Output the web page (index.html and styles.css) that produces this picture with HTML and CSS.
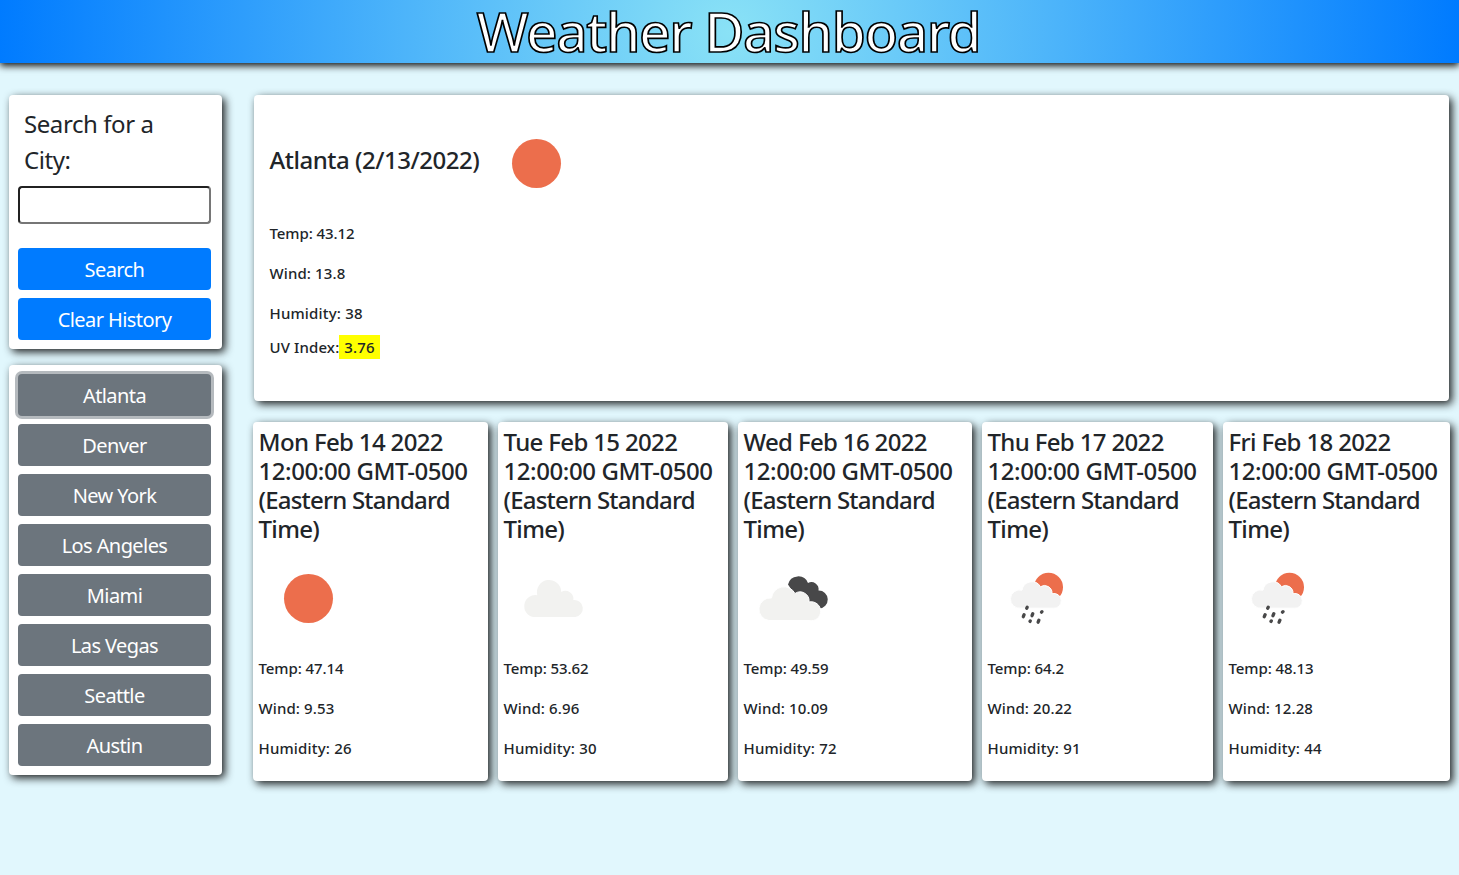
FILE: index.html
```html
<!DOCTYPE html>
<html lang="en">
<head>
<meta charset="utf-8">
<title>Weather Dashboard</title>
<link rel="stylesheet" href="styles.css">
</head>
<body>
<svg class="defs" width="0" height="0" aria-hidden="true">
  <symbol id="sun" viewBox="0 0 100 100"><circle cx="50.500" cy="49.500" r="24.5" fill="#ec6e4c"/></symbol>
  <symbol id="cloud" viewBox="0 0 100 100"><path fill="#f2f2f0" transform="translate(-1.700 -.5)" d="M32 68.500A11 11 0 1 1 36 46.800A12.200 12.200 0 1 1 60 43.500A8 8 0 0 1 72 51.600A8.500 8.500 0 1 1 74 68.500Z"/></symbol>
  <symbol id="broken" viewBox="0 0 100 100">
    <g transform="translate(-1 -.5)">
    <path fill="#484849" d="M46 36A10.500 10.500 0 0 1 66 34.500A7.200 7.200 0 0 1 76.500 42A7.800 7.800 0 1 1 77 60L62 60Z"/>
    <path fill="#f2f2f0" stroke="#fff" stroke-width="1" d="M27 72A11.200 11.200 0 1 1 29.500 49.500A12.500 12.500 0 0 1 53 45A9 9 0 0 1 67 53.500A9.500 9.500 0 1 1 67 72Z"/>
    </g>
  </symbol>
  <symbol id="rain" viewBox="0 0 100 100">
    <g transform="translate(1 -.3)">
    <circle cx="60.500" cy="38.500" r="14.500" fill="#ec6e4c"/>
    <path fill="#f2f2f2" stroke="#fff" stroke-width="1" d="M33 59.500A9.200 9.200 0 1 1 34 41.500A10 10 0 0 1 52.500 38A7.500 7.500 0 0 1 64 45A7.400 7.400 0 1 1 65 59.500Z"/>
    <path fill="none" stroke="#484849" stroke-width="3.300" stroke-linecap="round" d="M39.200 58.500L38.700 59.500M36.100 66L35.300 68M44.800 65L44 67M54 63L53.500 63.500M50.900 71.500L50.100 73.500M42.300 72.200L42 72.700"/>
    </g>
  </symbol>
</svg>
<header class="banner"><h1 class="title">Weather Dashboard</h1></header>
<main class="layout">
  <aside class="sidebar">
    <section class="panel search">
      <label class="search-label" for="city">Search for a City:</label>
      <input class="search-input" id="city" type="text">
      <button class="btn primary">Search</button>
      <button class="btn primary">Clear History</button>
    </section>
    <section class="panel history">
      <button class="btn active">Atlanta</button>
      <button class="btn">Denver</button>
      <button class="btn">New York</button>
      <button class="btn">Los Angeles</button>
      <button class="btn">Miami</button>
      <button class="btn">Las Vegas</button>
      <button class="btn">Seattle</button>
      <button class="btn">Austin</button>
    </section>
  </aside>
  <div class="content">
    <section class="panel current">
      <div class="current-head"><h2 class="city">Atlanta (2/13/2022)</h2><svg class="icon"><use href="#sun"/></svg></div>
      <p class="stat">Temp: 43.12</p>
      <p class="stat wind">Wind: 13.8</p>
      <p class="stat humidity">Humidity: 38</p>
      <p class="uv">UV Index:<span class="uv-value">3.76</span></p>
    </section>
    <section class="forecast">
      <article class="panel day"><h3 class="date"><span>Mon Feb 14 2022</span> <span class="time">12:00:00 GMT-0500</span> <span class="zone">(Eastern Standard</span> <span>Time)</span></h3><svg class="icon"><use href="#sun"/></svg><p class="stat">Temp: 47.14</p><p class="stat wind">Wind: 9.53</p><p class="stat humidity">Humidity: 26</p></article>
      <article class="panel day"><h3 class="date"><span>Tue Feb 15 2022</span> <span class="time">12:00:00 GMT-0500</span> <span class="zone">(Eastern Standard</span> <span>Time)</span></h3><svg class="icon"><use href="#cloud"/></svg><p class="stat">Temp: 53.62</p><p class="stat wind">Wind: 6.96</p><p class="stat humidity">Humidity: 30</p></article>
      <article class="panel day"><h3 class="date"><span>Wed Feb 16 2022</span> <span class="time">12:00:00 GMT-0500</span> <span class="zone">(Eastern Standard</span> <span>Time)</span></h3><svg class="icon"><use href="#broken"/></svg><p class="stat">Temp: 49.59</p><p class="stat wind">Wind: 10.09</p><p class="stat humidity">Humidity: 72</p></article>
      <article class="panel day"><h3 class="date"><span>Thu Feb 17 2022</span> <span class="time">12:00:00 GMT-0500</span> <span class="zone">(Eastern Standard</span> <span>Time)</span></h3><svg class="icon"><use href="#rain"/></svg><p class="stat">Temp: 64.2</p><p class="stat wind">Wind: 20.22</p><p class="stat humidity">Humidity: 91</p></article>
      <article class="panel day"><h3 class="date"><span>Fri Feb 18 2022</span> <span class="time">12:00:00 GMT-0500</span> <span class="zone">(Eastern Standard</span> <span>Time)</span></h3><svg class="icon"><use href="#rain"/></svg><p class="stat">Temp: 48.13</p><p class="stat wind">Wind: 12.28</p><p class="stat humidity">Humidity: 44</p></article>
    </section>
  </div>
</main>
</body>
</html>
```
FILE: styles.css
```css
* { box-sizing: border-box; }
body { margin: 0; min-height: 875px; background: #e1f7fd; color: #212529; font-family: "Noto Sans", "Open Sans", sans-serif; }
h1, h2, h3, p { margin: 0; font-weight: 400; }
.defs { position: absolute; }
.banner { height: 63px; background: radial-gradient(circle, #8ae2f6, #007bff); box-shadow: 0 3px 7px rgba(0, 0, 0, .9); text-align: center; }
.title { font-size: 55px; line-height: 62px; font-weight: 500; letter-spacing: -1.35px; padding-right: 2px; color: #fff; -webkit-text-stroke: 1.7px #000; white-space: nowrap; }
.layout { display: grid; grid-template-columns: 213px 1197px; column-gap: 31px; padding: 32px 9px 0; align-items: start; }
.panel { background: #fff; border-radius: 4px; box-shadow: 3px 3px 8px rgba(0, 0, 0, .88); }
.sidebar { display: grid; gap: 16px; }
.search, .history { display: flex; flex-direction: column; gap: 8px; padding: 9px 11px 9px 9px; }
.search { height: 254px; }
.history { height: 410px; }
.search-label { font-size: 24px; line-height: 36px; letter-spacing: -.42px; padding: 2px 6px 0; height: 74px; }
.search-input { width: 100%; height: 38px; margin-bottom: 16px; border: 2px inset #767676; border-radius: 4px; background: #fff; }
.btn { height: 42px; border: 0; border-radius: 4px; background: #6c757d; color: #fff; font: 400 20px/40px "Noto Sans", sans-serif; letter-spacing: -.58px; padding: 2px 0 0; flex: none; }
.primary { background: #007bff; }
.active { box-shadow: 0 0 0 3px #b5babe; }
.current { width: 1195px; height: 306px; margin-left: 1px; padding: 18px 15.5px; }
.current-head { display: flex; align-items: center; gap: 6.5px; height: 100px; margin-bottom: 8px; }
.city { font-size: 24px; line-height: 29px; font-weight: 500; letter-spacing: -.48px; width: 210px; margin-bottom: 7px; white-space: nowrap; }
.icon { display: block; width: 100px; height: 100px; }
.current .icon { margin-top: 1px; }
.stat { font-size: 15px; font-weight: 500; line-height: 24px; letter-spacing: -.07px; margin-bottom: 16px; white-space: nowrap; }
.stat.wind { letter-spacing: .12px; }
.stat.humidity { letter-spacing: .18px; }
.current .humidity { margin-bottom: 10px; }
.uv { font-size: 15px; font-weight: 500; line-height: 24px; letter-spacing: .12px; }
.uv-value { display: inline-block; background: #ff0; padding: 0 5px; }
.forecast { display: grid; grid-template-columns: 235px 230px 234px 231px 227px; gap: 10px; margin-top: 21px; }
.day { height: 359px; padding: 6px 5px 5px 5.5px; }
.date { font-size: 24px; line-height: 29px; font-weight: 500; letter-spacing: -.65px; white-space: nowrap; margin: -1px 0 6px; }
.date span { display: block; }
.date .time { letter-spacing: -.42px; }
.date .zone { letter-spacing: -.8px; }
.day .icon { margin-bottom: 7px; margin-left: -.5px; }
```
